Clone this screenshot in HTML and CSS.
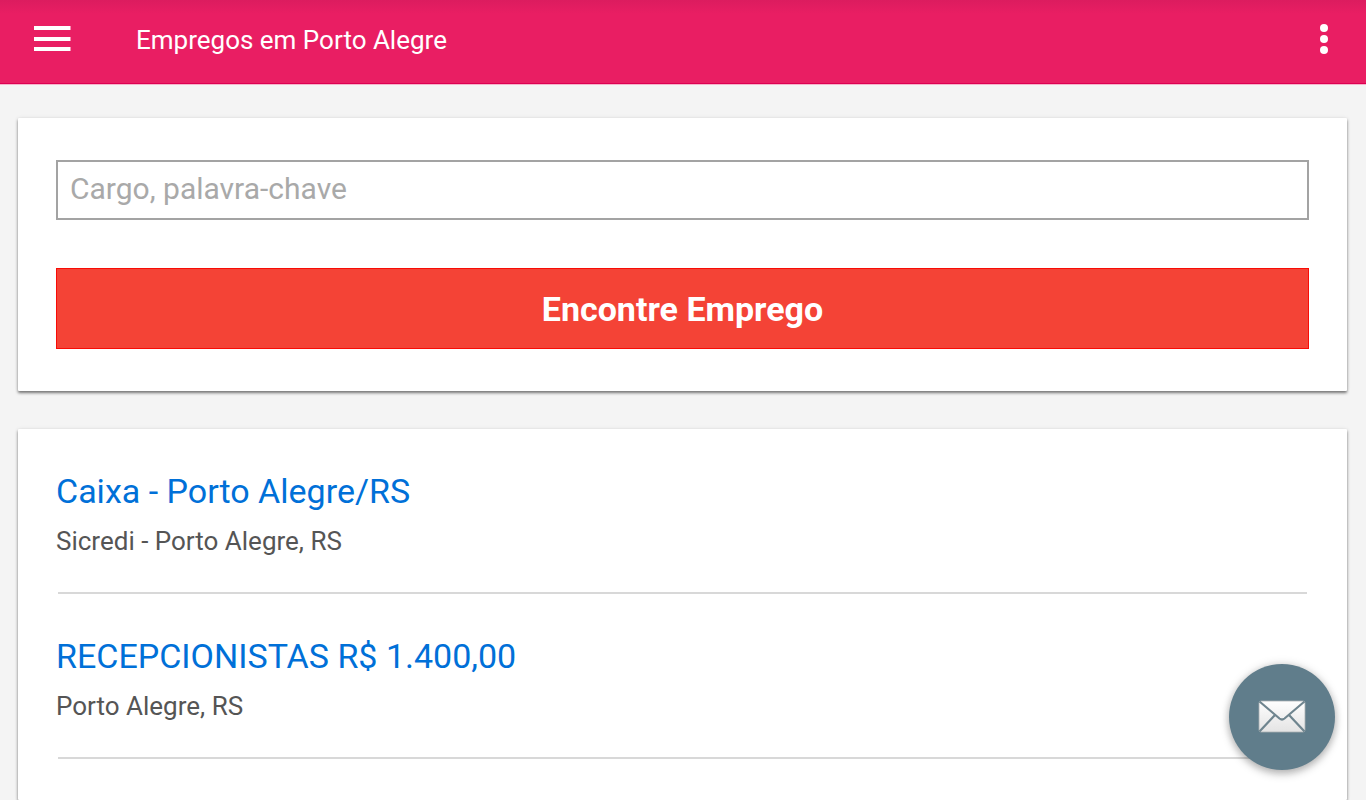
FILE: index.html
```html
<!DOCTYPE html>
<html lang="pt-BR">
<head>
    <meta charset="UTF-8">
    <meta name="viewport" content="width=device-width, initial-scale=1.0">
    <title>Empregos em Porto Alegre</title>
    <link rel="stylesheet" href="styles.css">
</head>
<body>

    <header class="toolbar">
        <button class="icon-button" type="button" aria-label="Menu">
            <svg width="37" height="26" viewBox="0 0 37 26" fill="#fff">
                <rect width="36.500" height="4" y="0"/>
                <rect width="36.500" height="4" y="11"/>
                <rect width="36.500" height="4" y="21"/>
            </svg>
        </button>
        <h1>Empregos em Porto Alegre</h1>
        <button class="icon-button" type="button" aria-label="Mais opções">
            <svg width="8" height="32" viewBox="0 0 8 32" fill="#fff">
                <circle cx="4" cy="5" r="4"/>
                <circle cx="4" cy="16" r="4"/>
                <circle cx="4" cy="27" r="4"/>
            </svg>
        </button>
    </header>

    <main class="content">
        <!-- Busca -->
        <form class="card search">
            <input type="text" name="q" placeholder="Cargo, palavra-chave" aria-label="Cargo, palavra-chave">
            <button class="search-button" type="submit">Encontre Emprego</button>
        </form>

        <!-- Lista de vagas -->
        <section class="card jobs">
            <article class="job">
                <h2><a href="#">Caixa - Porto Alegre/RS</a></h2>
                <p>Sicredi - Porto Alegre, RS</p>
            </article>
            <article class="job">
                <h2><a href="#">RECEPCIONISTAS R$ 1.400,00</a></h2>
                <p>Porto Alegre, RS</p>
            </article>
        </section>
    </main>

    <!-- Botão flutuante -->
    <button class="fab" type="button" aria-label="Receber vagas por e-mail">
        <svg width="48" height="34" viewBox="0 0 48 34">
            <defs>
                <linearGradient id="paper" x1="0" y1="0" x2="0" y2="34" gradientUnits="userSpaceOnUse">
                    <stop offset="0" stop-color="#fff"/>
                    <stop offset="1" stop-color="#e2e2e2"/>
                </linearGradient>
            </defs>
            <rect x="1" y="1" width="46" height="31" rx="2" fill="url(#paper)" stroke="#a9b0b3" stroke-width="0.8"/>
            <path d="M1.500 1.500L21.500 18.500Q24 20.500 26.500 18.500L46.500 1.500M1.500 31.500L16.500 15.500M46.500 31.500L31.500 15.500" fill="none" stroke="#6f858f" stroke-width="2.200"/>
        </svg>
    </button>

</body>
</html>
```
FILE: styles.css
```css
* {
    box-sizing: border-box;
}

body {
    display: flex;
    flex-direction: column;
    min-height: 100vh;
    margin: 0;
    background-color: #f4f4f4;
    font-family: Roboto, sans-serif;
}

button {
    border: none;
    padding: 0;
    font-family: inherit;
    cursor: pointer;
}

.toolbar {
    display: flex;
    align-items: center;
    height: 84px;
    padding: 0 38px 6px 34px;
    background: linear-gradient(#dc1c5f, #e91e63 14px);
    border-bottom: 1px solid #dc0052;
    box-shadow: 0 1px 0 #f5b5ca;
    color: #fff;
}

.toolbar h1 {
    flex: 1;
    margin: 0 0 0 65px;
    padding-top: 2px;
    font-size: 26px;
    line-height: 32px;
    font-weight: 400;
}

.icon-button {
    display: flex;
    background: none;
}

.content {
    flex: 1;
    display: flex;
    flex-direction: column;
    gap: 38px;
    padding: 34px 19px 0 18px;
}

.card {
    padding: 42px 38px;
    background-color: #fff;
    border-radius: 1px;
    box-shadow: 0 2px 3px rgba(0, 0, 0, 0.5), 0 0 4px rgba(0, 0, 0, 0.08);
}

.search {
    display: flex;
    flex-direction: column;
    gap: 48px;
}

.search input {
    width: 100%;
    height: 60px;
    padding: 0 12px 4px;
    border: 2px solid #a3a3a3;
    font-family: inherit;
    font-size: 30px;
}

.search input::placeholder {
    color: #a9a9a9;
}

.search-button {
    height: 81px;
    background-color: #f44336;
    border: 1px solid #f80c06;
    color: #fff;
    font-size: 34px;
    font-weight: 700;
}

.jobs {
    flex: 1;
    padding-top: 0;
    padding-bottom: 0;
}

.job {
    padding-top: 42px;
}

.job::after {
    content: "";
    display: block;
    height: 2px;
    margin: 35px 2px 0;
    background-color: #d8d8d8;
}

.job h2 {
    margin: 0 0 14px;
    font-size: 34px;
    line-height: 40px;
    font-weight: 400;
}

.job a {
    color: #0070d8;
    text-decoration: none;
}

.job p {
    margin: 0;
    color: #555;
    font-size: 26px;
    line-height: 32px;
}

.fab {
    position: fixed;
    right: 31px;
    bottom: 30px;
    display: flex;
    align-items: center;
    justify-content: center;
    width: 106px;
    height: 106px;
    border-radius: 50%;
    background-color: #607d8b;
    box-shadow: 0 4px 8px rgba(0, 0, 0, 0.25), 0 0 10px rgba(0, 0, 0, 0.15);
}
```
